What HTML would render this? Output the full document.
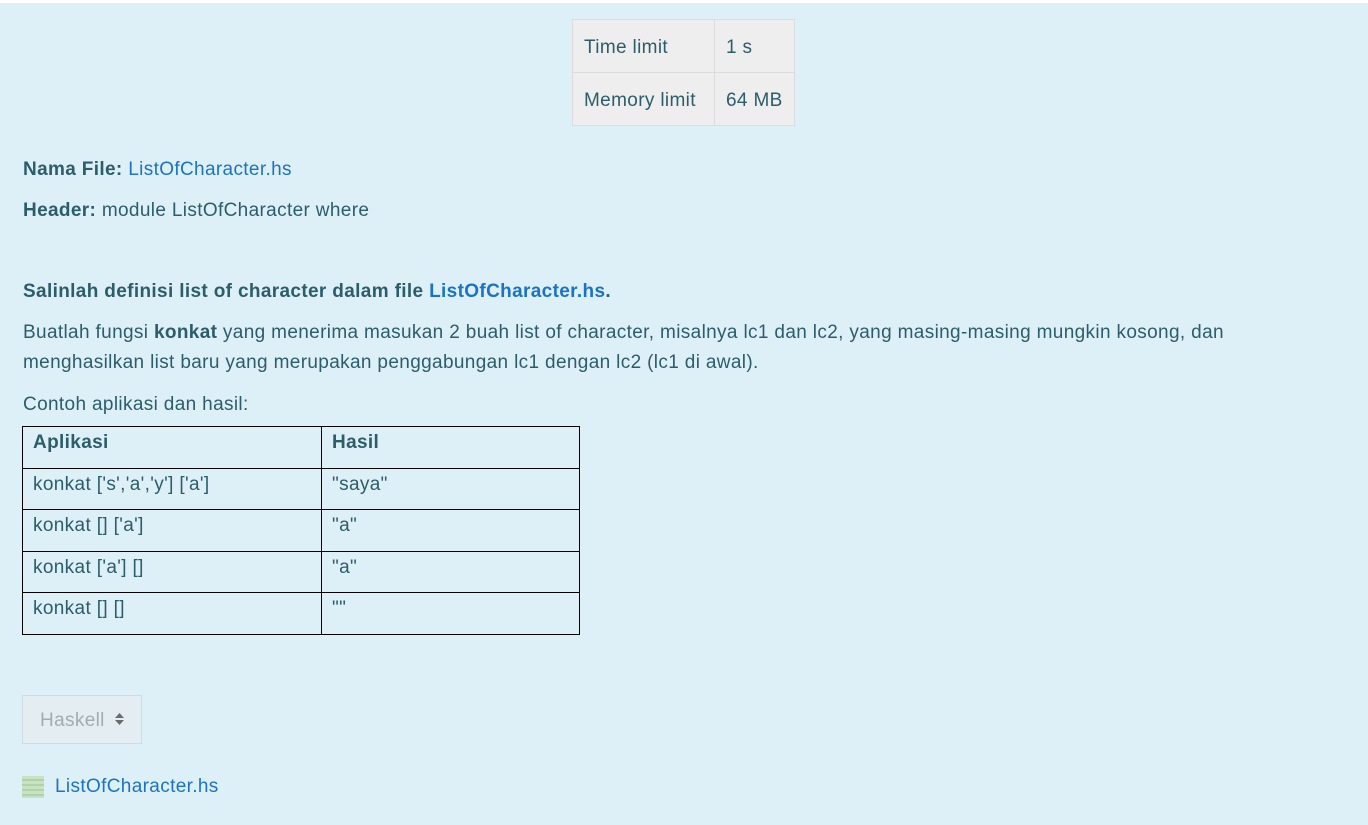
<!DOCTYPE html>
<html><head><meta charset="utf-8"><style>
body{margin:0;background:#def0f7;font-family:"Liberation Sans",sans-serif;color:#2c5d6b;font-size:19px;letter-spacing:0.35px}
.top{height:3px;background:#fff}
.wrap{position:relative;width:1368px;height:822px}
a{color:#1a73c8;text-decoration:none}
.lim{position:absolute;left:572px;top:16px;border-collapse:collapse;background:#eeeeee}
.lim td{border:1px solid #dcdcdc;padding:3px 11px 0;height:49px;box-sizing:border-box}
.p{position:absolute;left:23px;white-space:nowrap}
.ex{position:absolute;left:22px;top:423px;border-collapse:collapse}
.ex td{border:1px solid #000;padding:0 10px;vertical-align:top;padding-top:5px;box-sizing:border-box}
.btn{position:absolute;left:22px;top:692px;width:120px;height:49px;border:1px solid #cfdde2;background:#e4edf1;color:#a3acb1;box-sizing:border-box;padding:14px 0 0 17px}
</style></head><body><div class="top"></div><div class="wrap">
<table class="lim"><tr><td style="width:142px;height:53px">Time limit</td><td style="width:80px">1 s</td></tr><tr><td style="height:53px">Memory limit</td><td>64 MB</td></tr></table>
<div class="p" style="top:156px"><b>Nama File:</b> <a>ListOfCharacter.hs</a></div>
<div class="p" style="top:197px"><b>Header:</b> module ListOfCharacter where</div>
<div class="p" style="top:278px"><b>Salinlah definisi list of character dalam file <a>ListOfCharacter.hs</a>.</b></div>
<div class="p" style="top:315px;line-height:30px">Buatlah fungsi <b>konkat</b> yang menerima masukan 2 buah list of character, misalnya lc1 dan lc2, yang masing-masing mungkin kosong, dan<br>menghasilkan list baru yang merupakan penggabungan lc1 dengan lc2 (lc1 di awal).</div>
<div class="p" style="top:391px">Contoh aplikasi dan hasil:</div>
<table class="ex">
<tr style="height:42px"><td style="width:299px"><b>Aplikasi</b></td><td style="width:258px"><b>Hasil</b></td></tr>
<tr style="height:41px"><td>konkat ['s','a','y'] ['a']</td><td>"saya"</td></tr>
<tr style="height:42px"><td>konkat [] ['a']</td><td>"a"</td></tr>
<tr style="height:41px"><td>konkat ['a'] []</td><td>"a"</td></tr>
<tr style="height:42px"><td>konkat [] []</td><td>""</td></tr>
</table>
<div class="btn">Haskell <svg width="11" height="14" viewBox="0 0 11 14" style="margin-left:4px"><path d="M5.5 1L10 6H1z M5.5 13L10 8H1z" fill="#6b6b6b"/></svg></div>
<div style="position:absolute;left:22px;top:773px;width:22px;height:22px;background:repeating-linear-gradient(#c9e2c4 0 3px,#aed3a8 3px 5px)"></div>
<div class="p" style="top:773px;left:55px"><a>ListOfCharacter.hs</a></div>
</div></body></html>
